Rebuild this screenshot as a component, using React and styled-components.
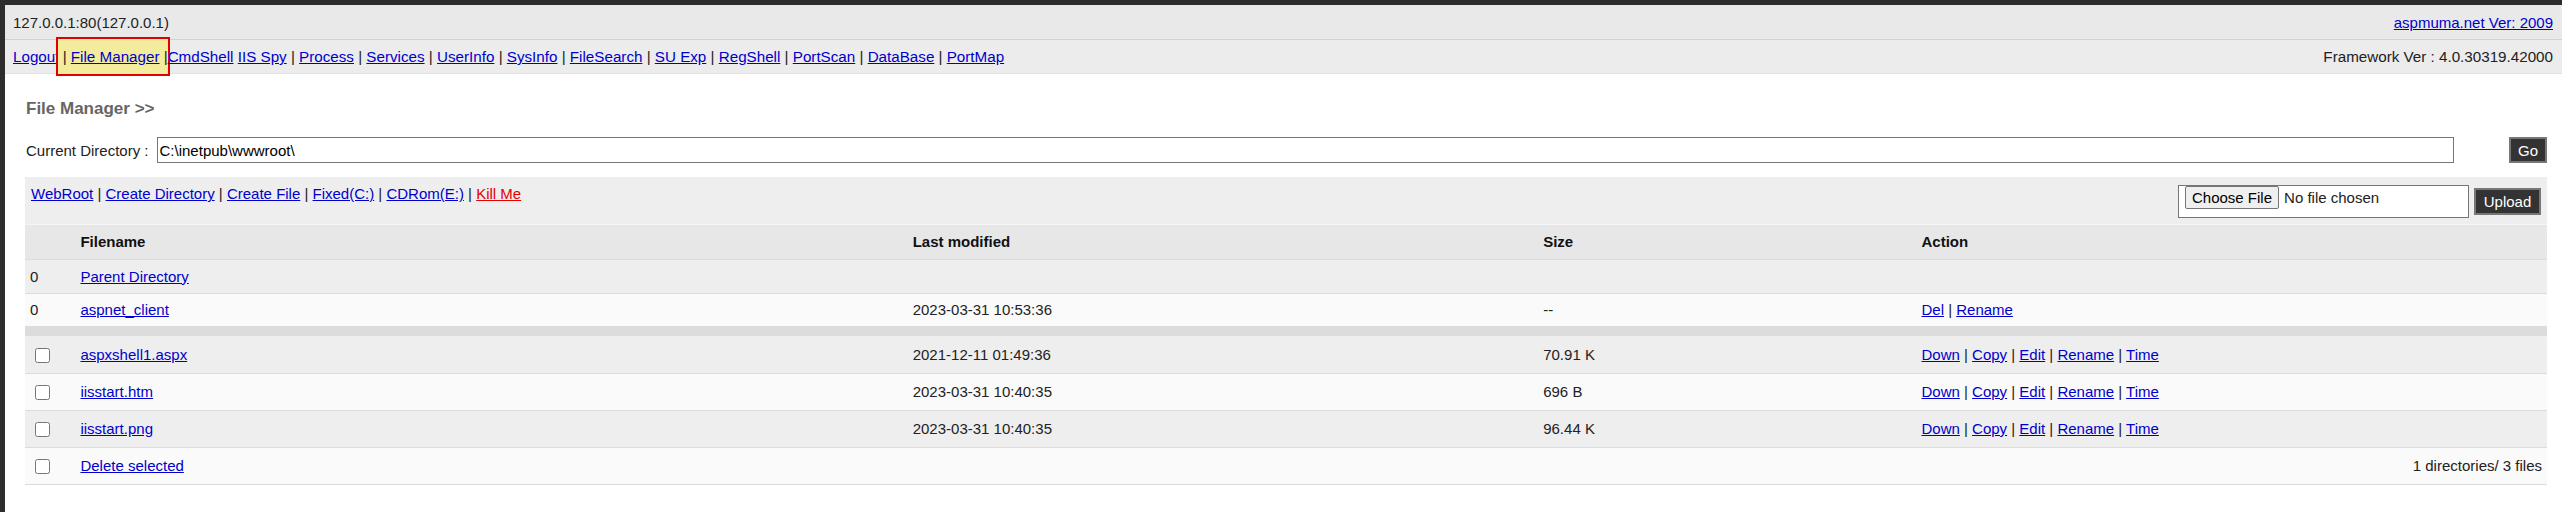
import styled, { createGlobalStyle } from "styled-components";

const navItems = [
  "Logout",
  "File Manager",
  "CmdShell",
  "IIS Spy",
  "Process",
  "Services",
  "UserInfo",
  "SysInfo",
  "FileSearch",
  "SU Exp",
  "RegShell",
  "PortScan",
  "DataBase",
  "PortMap",
];

const toolLinks = ["WebRoot", "Create Directory", "Create File", "Fixed(C:)", "CDRom(E:)"];

const dirs = [{ name: "aspnet_client", time: "2023-03-31 10:53:36", size: "--" }];

const files = [
  { name: "aspxshell1.aspx", time: "2021-12-11 01:49:36", size: "70.91 K" },
  { name: "iisstart.htm", time: "2023-03-31 10:40:35", size: "696 B" },
  { name: "iisstart.png", time: "2023-03-31 10:40:35", size: "96.44 K" },
];

const fileActions = ["Down", "Copy", "Edit", "Rename", "Time"];

export default function App() {
  return (
    <>
      <GlobalStyle />
      <Frame>
        <TopBar>
          <span>127.0.0.1:80(127.0.0.1)</span>
          <Link href="#">aspmuma.net Ver: 2009</Link>
        </TopBar>
        <NavBar>
          <NavLinks>
            {navItems.map((item, i) => {
              if (item === "File Manager") {
                return (
                  <Highlight key={item}>
                    {" | "}
                    <Link href="#">{item}</Link>
                    {" |"}
                  </Highlight>
                );
              }
              const next = navItems[i + 1];
              return (
                <span key={item}>
                  <Link href="#">{item}</Link>
                  {i < navItems.length - 1 && next !== "File Manager" && (
                    <Sep>{i > 0 && navItems[i - 1] === "File Manager" ? " " : " | "}</Sep>
                  )}
                </span>
              );
            })}
          </NavLinks>
          <span>Framework Ver : 4.0.30319.42000</span>
        </NavBar>

        <Main>
          <Heading>File Manager &gt;&gt;</Heading>

          <DirRow>
            <Label>Current Directory :</Label>
            <PathInput defaultValue="C:\inetpub\wwwroot\" />
            <DarkButton $w={38} $h={26}>Go</DarkButton>
          </DirRow>

          <ActionBar>
            <span>
              {toolLinks.map((t) => (
                <span key={t}>
                  <Link href="#">{t}</Link>
                  <Sep> | </Sep>
                </span>
              ))}
              <Link href="#" $danger>
                Kill Me
              </Link>
            </span>
            <UploadBox>
              <FileInput type="file" />
              <DarkButton $w={67} $h={27}>Upload</DarkButton>
            </UploadBox>
          </ActionBar>

          <Table>
            <colgroup>
              <col style={{ width: "2%" }} />
              <col style={{ width: "33%" }} />
              <col style={{ width: "25%" }} />
              <col style={{ width: "15%" }} />
              <col style={{ width: "25%" }} />
            </colgroup>
            <tbody>
              <Row $tone="head" $h={34}>
                <HeadCell />
                <HeadCell>Filename</HeadCell>
                <HeadCell>Last modified</HeadCell>
                <HeadCell>Size</HeadCell>
                <HeadCell>Action</HeadCell>
              </Row>
              <Row $tone="grey" $h={34}>
                <Cell>0</Cell>
                <Cell>
                  <Link href="#">Parent Directory</Link>
                </Cell>
                <Cell />
                <Cell />
                <Cell />
              </Row>
              {dirs.map((d) => (
                <Row key={d.name} $tone="light" $h={33}>
                  <Cell>0</Cell>
                  <Cell>
                    <Link href="#">{d.name}</Link>
                  </Cell>
                  <Cell>{d.time}</Cell>
                  <Cell>{d.size}</Cell>
                  <Cell>
                    <Link href="#">Del</Link>
                    <Sep> | </Sep>
                    <Link href="#">Rename</Link>
                  </Cell>
                </Row>
              ))}
              <Divider>
                <td colSpan={5} />
              </Divider>
              {files.map((f, i) => (
                <Row key={f.name} $tone={i % 2 === 0 ? "grey" : "light"} $h={37}>
                  <Cell>
                    <Check type="checkbox" />
                  </Cell>
                  <Cell>
                    <Link href="#">{f.name}</Link>
                  </Cell>
                  <Cell>{f.time}</Cell>
                  <Cell>{f.size}</Cell>
                  <Cell>
                    {fileActions.map((a, j) => (
                      <span key={a}>
                        <Link href="#">{a}</Link>
                        {j < fileActions.length - 1 && <Sep> | </Sep>}
                      </span>
                    ))}
                  </Cell>
                </Row>
              ))}
              <Row $tone="light" $h={37}>
                <Cell>
                  <Check type="checkbox" />
                </Cell>
                <Cell>
                  <Link href="#">Delete selected</Link>
                </Cell>
                <Cell colSpan={3} $right>
                  1 directories/ 3 files
                </Cell>
              </Row>
            </tbody>
          </Table>
        </Main>
      </Frame>
    </>
  );
}

const GlobalStyle = createGlobalStyle`
  html, body {
    margin: 0;
    padding: 0;
    height: 512px;
    overflow: hidden;
  }
  body {
    box-sizing: border-box;
    padding: 5px 0 0 5px;
    background: #2d2d2d;
    font-family: "Liberation Sans", Arial, sans-serif;
    font-size: 15px;
    color: #222;
  }
`;

const Frame = styled.div`
  height: 507px;
  background: #fff;
`;

const TopBar = styled.div`
  height: 34px;
  padding: 0 9px 0 8px;
  display: flex;
  align-items: center;
  justify-content: space-between;
  background: #e9e9e9;
  border-bottom: 1px solid #d2d2d2;
`;

const NavBar = styled(TopBar)`
  height: 33px;
  background: #ececec;
  border-bottom: 1px solid #e0e0e0;
  font-size: 15.2px;
`;

const NavLinks = styled.div`
  white-space: nowrap;
`;

const Link = styled.a`
  color: ${(p) => (p.$danger ? "#e60000" : "#0000cc")};
  text-decoration: underline;
`;

const Sep = styled.span`
  white-space: pre;
  color: #222;
`;

const Highlight = styled.span`
  white-space: pre;
  background: #f2ec9c;
  border: 2px solid #e00000;
  padding: 9px 0;
  margin: 0 -2px 0 -3px;
`;

const Main = styled.div`
  padding: 0 15px 0 20px;
`;

const Heading = styled.h2`
  margin: 25px 0 0 1px;
  font-size: 17px;
  line-height: 20px;
  font-weight: bold;
  color: #666;
`;

const DirRow = styled.div`
  margin-top: 18px;
  padding-left: 1px;
  display: flex;
  align-items: center;
`;

const Label = styled.span`
  margin-right: 8px;
`;

const PathInput = styled.input`
  flex: 1;
  height: 26px;
  box-sizing: border-box;
  margin-right: 55px;
  padding: 0 2px;
  border: 1px solid #767676;
  font-family: inherit;
  font-size: 15px;
  color: #000;
  outline: none;
`;

const DarkButton = styled.button`
  width: ${(p) => p.$w}px;
  height: ${(p) => p.$h}px;
  box-sizing: border-box;
  padding: 0;
  background: #333;
  color: #fff;
  border: 2px solid #777;
  font-family: inherit;
  font-size: 15px;
`;

const ActionBar = styled.div`
  margin-top: 14px;
  height: 48px;
  box-sizing: border-box;
  padding: 8px 6px 0 6px;
  display: flex;
  align-items: flex-start;
  justify-content: space-between;
  background: #eee;
  border-bottom: 1px solid #f6f6f6;
  line-height: 18px;
`;

const UploadBox = styled.div`
  display: flex;
  align-items: center;
  gap: 5px;
`;

const FileInput = styled.input`
  width: 291px;
  height: 33px;
  box-sizing: border-box;
  padding: 0 6px;
  border: 1px solid #767676;
  background: #fff;
  font-family: inherit;
  font-size: 15px;
  color: #222;

  &::file-selector-button {
    margin-right: 5px;
    padding: 2px 6px;
    border: 1px solid #767676;
    border-radius: 2px;
    background: #efefef;
    font-family: inherit;
    font-size: 15px;
    color: #000;
  }
`;

const Table = styled.table`
  width: 100%;
  border-collapse: collapse;
  table-layout: fixed;
`;

const Row = styled.tr`
  height: ${(p) => p.$h}px;
  background: ${(p) => (p.$tone === "head" ? "#e7e7e7" : p.$tone === "grey" ? "#eee" : "#fafafa")};
  border-bottom: 1px solid #dcdcdc;
`;

const Cell = styled.td`
  padding: 0 5px;
  white-space: nowrap;
  vertical-align: middle;
  text-align: ${(p) => (p.$right ? "right" : "left")};
`;

const HeadCell = styled(Cell)`
  font-weight: bold;
  color: #111;
`;

const Divider = styled.tr`
  height: 10px;
  background: #dcdcdc;
  border-bottom: 1px solid #f0f0f0;
`;

const Check = styled.input`
  width: 15px;
  height: 15px;
  margin: 0 0 0 5px;
  vertical-align: middle;
`;
